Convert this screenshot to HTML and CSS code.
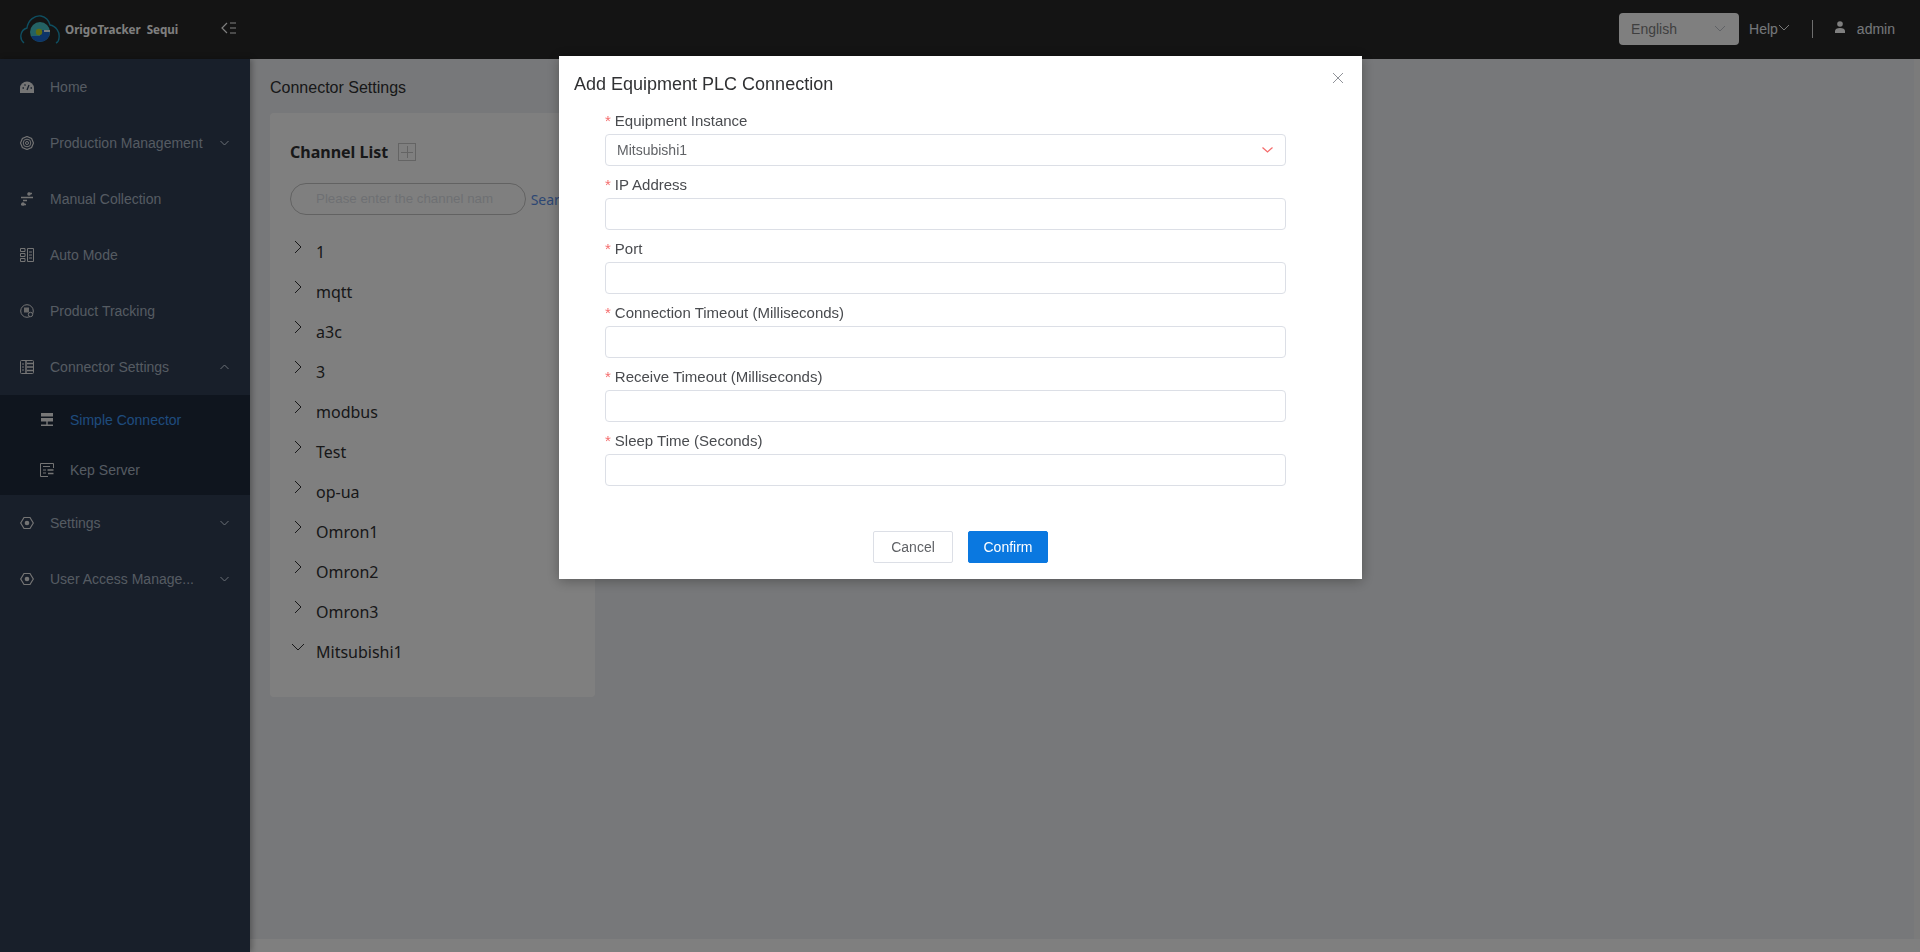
FILE: index.html
```html
<!DOCTYPE html>
<html lang="en">
<head>
  <meta charset="UTF-8">
  <title>OrigoTracker Sequi</title>
  <link rel="stylesheet" href="styles.css">
</head>
<body>
  <div class="header">
    <div class="logo">
      <svg width="40" height="30" viewBox="0 0 40 30">
        <path d="M4 28C-1 24 0 15 7 13C8 5 15 0 21 1C26 2 29 6 30 10C36 11 40 17 39 23C39 25 38 27 36 28" fill="none" stroke="#1d9cc0" stroke-width="1.4"/>
        <circle cx="20" cy="17" r="10" fill="#48c4c8"/>
        <path d="M11 21A10 10 0 0 0 29.500 20V15H20V21Z" fill="#1a68d0"/>
        <path d="M24 15H30V17H24Z" fill="#e8f4f4"/>
        <circle cx="19" cy="17" r="3.200" fill="#c0d820"/>
      </svg>
      <span class="logo-text">OrigoTracker&nbsp; Sequi</span>
    </div>
    <svg class="collapse" width="16" height="12" viewBox="0 0 16 12">
      <path d="M6 1L1 6L6 11M9 1H15M9 6H15M9 11H15" fill="none" stroke="#fff" stroke-width="1.2"/>
    </svg>
    <div class="header-right">
      <div class="lang">
        <span>English</span>
        <svg width="12" height="7" viewBox="0 0 12 7"><path d="M1 1L6 6L11 1" fill="none" stroke="#c0c4cc"/></svg>
      </div>
      <span class="help">Help</span>
      <svg class="help-arrow" width="12" height="7" viewBox="0 0 12 7"><path d="M1 1L6 6L11 1" fill="none" stroke="#f0f0f0"/></svg>
      <span class="divider"></span>
      <svg class="user-icon" width="12" height="12" viewBox="0 0 12 12"><circle cx="6" cy="3" r="2.800" fill="#fff"/><path d="M1 12V10C1 8 3 7 6 7S11 8 11 10V12Z" fill="#fff"/></svg>
      <span class="user-name">admin</span>
    </div>
  </div>

  <div class="content">
    <div class="sidebar">
      <div class="menu-item">
        <svg class="icon" viewBox="0 0 14 14"><path d="M0 13V8A7 6.500 0 0 1 14 8V13Z" fill="#e8e8e8"/><path d="M7 10L9 5M2.500 8H4M10.500 8H12M4.500 4.500L5.500 5.500" stroke="#304058" stroke-width="1.300"/></svg>
        <span class="menu-text">Home</span>
      </div>
      <div class="menu-item">
        <svg class="icon" viewBox="0 0 14 14"><path d="M7 .5L11.600 2.400L13.500 7L11.600 11.600L7 13.500L2.400 11.600L.5 7L2.400 2.400Z" fill="none" stroke="#e8e8e8" stroke-width="1.200"/><circle cx="7" cy="7" r="3.800" fill="none" stroke="#e8e8e8"/><circle cx="7" cy="7" r="1.500" fill="none" stroke="#e8e8e8"/></svg>
        <span class="menu-text">Production Management</span>
        <svg class="arrow" viewBox="0 0 9 6"><path d="M.5 1L4.500 5L8.500 1" fill="none" stroke="#d4e0ee"/></svg>
      </div>
      <div class="menu-item">
        <svg class="icon" viewBox="0 0 14 14"><path d="M8 1.500H12M1 5.500H13M3 8.500H7M1 12.500H6" fill="none" stroke="#e8e8e8" stroke-width="1.300"/><circle cx="9" cy="2" r="1.800" fill="#e8e8e8"/><circle cx="3" cy="12" r="1.800" fill="#e8e8e8"/></svg>
        <span class="menu-text">Manual Collection</span>
      </div>
      <div class="menu-item">
        <svg class="icon" viewBox="0 0 14 14"><path d="M7.500 .5H13.500V13.500H7.500ZM9 4H12M9 7H12M9 10H12" fill="none" stroke="#e8e8e8"/><path d="M.5 .5H5V3.500H.5ZM.5 5.500H5V8.500H.5ZM.5 10.500H5V13.500H.5Z" fill="none" stroke="#e8e8e8"/></svg>
        <span class="menu-text">Auto Mode</span>
      </div>
      <div class="menu-item">
        <svg class="icon" viewBox="0 0 14 14"><circle cx="7" cy="7" r="6.300" fill="none" stroke="#e8e8e8"/><path d="M4 3.500H9V8.500H4Z" fill="#d0d0d0"/><circle cx="10.500" cy="10.500" r="2.200" fill="#304058" stroke="#e8e8e8"/></svg>
        <span class="menu-text">Product Tracking</span>
      </div>
      <div class="menu-item">
        <svg class="icon" viewBox="0 0 14 14"><rect x=".5" y=".5" width="13" height="13" rx="1" fill="none" stroke="#e8e8e8"/><path d="M6 1V13M7 3.500H13M7 7H13M7 10.500H13" fill="none" stroke="#e8e8e8" stroke-width="1.500"/><path d="M2 4H4M2 7H4M2 10H4" stroke="#e8e8e8"/></svg>
        <span class="menu-text">Connector Settings</span>
        <svg class="arrow" viewBox="0 0 9 6"><path d="M.5 5L4.500 1L8.500 5" fill="none" stroke="#d4e0ee"/></svg>
      </div>
      <div class="submenu">
        <div class="sub-item">
          <svg class="icon" viewBox="0 0 14 14"><path d="M1 0H13V3.500H1ZM1 5H13V8.500H1ZM6.300 8.500H7.700V11.500H6.300ZM1 11.500H13V13H1Z" fill="#f0f0f0"/></svg>
          <span class="menu-text active">Simple Connector</span>
        </div>
        <div class="sub-item">
          <svg class="icon" viewBox="0 0 14 14"><path d="M13.500 5V.5H.5V13.500H8M3 3.500H10M3 7H6M3 10H6" fill="none" stroke="#e8e8e8"/><path d="M7.500 7H13.500M8 10.500H13.500" stroke="#e8e8e8" stroke-width="1.300"/></svg>
          <span class="menu-text">Kep Server</span>
        </div>
      </div>
      <div class="menu-item">
        <svg class="icon" viewBox="0 0 14 14"><path d="M4 1.500H10L13.300 7L10 12.500H4L.7 7Z" fill="none" stroke="#e8e8e8" stroke-width="1.200"/><circle cx="7" cy="7" r="2.300" fill="#e8e8e8"/></svg>
        <span class="menu-text">Settings</span>
        <svg class="arrow" viewBox="0 0 9 6"><path d="M.5 1L4.500 5L8.500 1" fill="none" stroke="#d4e0ee"/></svg>
      </div>
      <div class="menu-item">
        <svg class="icon" viewBox="0 0 14 14"><path d="M4 1.500H10L13.300 7L10 12.500H4L.7 7Z" fill="none" stroke="#e8e8e8" stroke-width="1.200"/><circle cx="7" cy="7" r="2.300" fill="#e8e8e8"/></svg>
        <span class="menu-text">User Access Manage...</span>
        <svg class="arrow" viewBox="0 0 9 6"><path d="M.5 1L4.500 5L8.500 1" fill="none" stroke="#d4e0ee"/></svg>
      </div>
    </div>

    <div class="main">
      <div class="main-row">
        <div class="main-body">
          <div class="page-title">Connector Settings</div>
          <div class="card">
            <div class="card-head">
              <span class="card-title">Channel List</span>
              <span class="add-box"></span>
            </div>
            <div class="search-row">
              <div class="search-input">Please enter the channel nam</div>
              <span class="search-link">Search</span>
            </div>
            <div class="tree">
              <div class="tree-row"><svg class="tree-arrow" viewBox="0 0 8 14"><path d="M1 1L7 7L1 13" fill="none" stroke="#303133"/></svg><span>1</span></div>
              <div class="tree-row"><svg class="tree-arrow" viewBox="0 0 8 14"><path d="M1 1L7 7L1 13" fill="none" stroke="#303133"/></svg><span>mqtt</span></div>
              <div class="tree-row"><svg class="tree-arrow" viewBox="0 0 8 14"><path d="M1 1L7 7L1 13" fill="none" stroke="#303133"/></svg><span>a3c</span></div>
              <div class="tree-row"><svg class="tree-arrow" viewBox="0 0 8 14"><path d="M1 1L7 7L1 13" fill="none" stroke="#303133"/></svg><span>3</span></div>
              <div class="tree-row"><svg class="tree-arrow" viewBox="0 0 8 14"><path d="M1 1L7 7L1 13" fill="none" stroke="#303133"/></svg><span>modbus</span></div>
              <div class="tree-row"><svg class="tree-arrow" viewBox="0 0 8 14"><path d="M1 1L7 7L1 13" fill="none" stroke="#303133"/></svg><span>Test</span></div>
              <div class="tree-row"><svg class="tree-arrow" viewBox="0 0 8 14"><path d="M1 1L7 7L1 13" fill="none" stroke="#303133"/></svg><span>op-ua</span></div>
              <div class="tree-row"><svg class="tree-arrow" viewBox="0 0 8 14"><path d="M1 1L7 7L1 13" fill="none" stroke="#303133"/></svg><span>Omron1</span></div>
              <div class="tree-row"><svg class="tree-arrow" viewBox="0 0 8 14"><path d="M1 1L7 7L1 13" fill="none" stroke="#303133"/></svg><span>Omron2</span></div>
              <div class="tree-row"><svg class="tree-arrow" viewBox="0 0 8 14"><path d="M1 1L7 7L1 13" fill="none" stroke="#303133"/></svg><span>Omron3</span></div>
              <div class="tree-row"><svg class="tree-arrow open" viewBox="0 0 14 8"><path d="M1 1L7 7L13 1" fill="none" stroke="#303133"/></svg><span>Mitsubishi1</span></div>
            </div>
          </div>
        </div>
        <div class="scroll-track"></div>
      </div>
      <div class="footer"></div>
    </div>
  </div>

  <div class="overlay"></div>

  <div class="modal">
    <div class="modal-title">Add Equipment PLC Connection</div>
    <svg class="modal-close" width="12" height="12" viewBox="0 0 12 12"><path d="M1 1L11 11M11 1L1 11" stroke="#909399"/></svg>
    <div class="form">
      <div class="field">
        <label><i>*</i>Equipment Instance</label>
        <div class="input select">
          <span>Mitsubishi1</span>
          <svg width="11" height="6" viewBox="0 0 11 6"><path d="M.5 .5L5.500 5L10.500 .5" fill="none" stroke="#f56c6c" stroke-width="1.300"/></svg>
        </div>
      </div>
      <div class="field"><label><i>*</i>IP Address</label><div class="input"></div></div>
      <div class="field"><label><i>*</i>Port</label><div class="input"></div></div>
      <div class="field"><label><i>*</i>Connection Timeout (Milliseconds)</label><div class="input"></div></div>
      <div class="field"><label><i>*</i>Receive Timeout (Milliseconds)</label><div class="input"></div></div>
      <div class="field"><label><i>*</i>Sleep Time (Seconds)</label><div class="input"></div></div>
    </div>
    <div class="modal-foot">
      <button class="btn">Cancel</button>
      <button class="btn primary">Confirm</button>
    </div>
  </div>
</body>
</html>
```

FILE: styles.css
```css
html, body {
  margin: 0;
  height: 100%;
  overflow: hidden;
}

body {
  display: flex;
  flex-direction: column;
  font-family: "Liberation Sans", Arial, sans-serif;
  background-color: #eff1f4;
}

.header {
  height: 59px;
  flex: none;
  display: flex;
  align-items: center;
  background-color: #282828;
  padding: 0 25px 0 20px;
}

.logo {
  width: 200px;
  display: flex;
  align-items: center;
  gap: 5px;
}

.logo-text {
  font-family: "Noto Sans", sans-serif;
  font-weight: 700;
  font-size: 11.6px;
  color: #fff;
  white-space: nowrap;
}

.collapse {
  margin: -4px 0 0 1px;
}

.header-right {
  margin-left: auto;
  display: flex;
  align-items: center;
  padding-bottom: 2px;
  color: #e8eef4;
  font-size: 14px;
}

.lang {
  width: 120px;
  height: 32px;
  box-sizing: border-box;
  display: flex;
  align-items: center;
  justify-content: space-between;
  padding: 0 13px 0 12px;
  background-color: #fff;
  border-radius: 4px;
  color: #7f7f7f;
}

.help {
  margin-left: 10px;
}

.help-arrow {
  margin-top: -3px;
}

.divider {
  width: 1px;
  height: 18px;
  background-color: #dcdcdc;
  margin: 0 21px 0 22px;
}

.user-icon {
  margin-top: -3px;
}

.user-name {
  margin-left: 11px;
}

.content {
  flex: 1;
  display: flex;
  min-height: 0;
}

.sidebar {
  width: 250px;
  flex: none;
  background-color: #303e54;
  box-shadow: 2px 0 6px rgba(0, 0, 0, .3);
  z-index: 1;
}

.menu-item, .sub-item {
  display: flex;
  align-items: center;
  font-size: 14px;
  color: #aab6c4;
}

.menu-item {
  height: 56px;
  padding: 0 21px 0 20px;
}

.sub-item {
  height: 50px;
  padding: 0 20px 0 40px;
}

.submenu {
  background-color: #1e2a3c;
}

.icon {
  width: 14px;
  height: 14px;
  flex: none;
  margin-right: 16px;
}

.menu-text {
  white-space: nowrap;
}

.menu-text.active {
  color: #3d98f8;
}

.arrow {
  width: 9px;
  height: 6px;
  margin-left: auto;
}

.main {
  flex: 1;
  display: flex;
  flex-direction: column;
  min-width: 0;
}

.main-row {
  flex: 1;
  display: flex;
  min-height: 0;
}

.main-body {
  flex: 1;
  padding: 19px 20px;
}

.scroll-track {
  width: 6px;
  background-color: #f7f7f7;
}

.footer {
  height: 13px;
  background-color: #fff;
}

.page-title {
  font-size: 16px;
  line-height: 20px;
  color: #303133;
  margin-bottom: 15px;
}

.card {
  width: 325px;
  height: 584px;
  box-sizing: border-box;
  background-color: #fff;
  border-radius: 4px;
  padding: 26px 20px;
}

.card-head {
  display: flex;
  align-items: center;
  gap: 10px;
  height: 26px;
}

.card-title {
  font-family: "Noto Sans", sans-serif;
  font-weight: 700;
  font-size: 16px;
  color: #303133;
}

.add-box {
  width: 16px;
  height: 16px;
  border: 1px solid #c8c8c8;
  background:
    linear-gradient(#c8c8c8, #c8c8c8) center / 12px 1px no-repeat,
    linear-gradient(#c8c8c8, #c8c8c8) center / 1px 12px no-repeat;
}

.search-row {
  display: flex;
  align-items: center;
  gap: 5px;
  margin-top: 18px;
}

.search-input {
  width: 236px;
  height: 32px;
  box-sizing: border-box;
  border: 1px solid #c4c4c4;
  border-radius: 16px;
  padding-left: 25px;
  font-size: 13.333px;
  line-height: 30px;
  color: #dcdfe6;
  white-space: nowrap;
}

.search-link {
  font-family: "Noto Sans", sans-serif;
  font-size: 14px;
  color: #5b8fe8;
}

.tree {
  margin-top: 17px;
}

.tree-row {
  position: relative;
  height: 40px;
  line-height: 40px;
  padding-left: 26px;
  font-family: "Noto Sans", sans-serif;
  font-size: 16px;
  color: #303133;
}

.tree-arrow {
  position: absolute;
  left: 4px;
  top: 8px;
  width: 8px;
  height: 14px;
}

.tree-arrow.open {
  left: 1px;
  top: 11px;
  width: 14px;
  height: 8px;
}

.overlay {
  position: fixed;
  inset: 0;
  background-color: rgba(0, 0, 0, .5);
  z-index: 2;
}

.modal {
  position: fixed;
  left: 559px;
  top: 56px;
  width: 803px;
  height: 523px;
  background-color: #fff;
  box-shadow: 0 2px 12px rgba(0, 0, 0, .3);
  z-index: 3;
}

.modal-title {
  font-size: 18px;
  line-height: 24px;
  color: #303133;
  padding: 16px 0 0 15px;
}

.modal-close {
  position: absolute;
  top: 16px;
  right: 18px;
}

.form {
  padding: 14px 76px 0 46px;
}

.field {
  height: 64px;
}

.field label {
  display: block;
  height: 24px;
  line-height: 22px;
  font-size: 15px;
  color: #494b4f;
}

.field i {
  font-style: normal;
  color: #f56c6c;
  margin-right: 4px;
}

.input {
  height: 32px;
  box-sizing: border-box;
  border: 1px solid #dcdfe6;
  border-radius: 4px;
}

.select {
  display: flex;
  align-items: center;
  justify-content: space-between;
  padding: 0 12px 0 11px;
  font-size: 14px;
  color: #606266;
}

.modal-foot {
  display: flex;
  justify-content: center;
  gap: 15px;
  padding-top: 37px;
}

.btn {
  width: 80px;
  height: 32px;
  padding: 0;
  font-family: inherit;
  font-size: 14px;
  color: #606266;
  background-color: #fff;
  border: 1px solid #dcdfe6;
  border-radius: 2px;
}

.btn.primary {
  color: #fff;
  background-color: #0a78e0;
  border-color: #0a78e0;
}
```
